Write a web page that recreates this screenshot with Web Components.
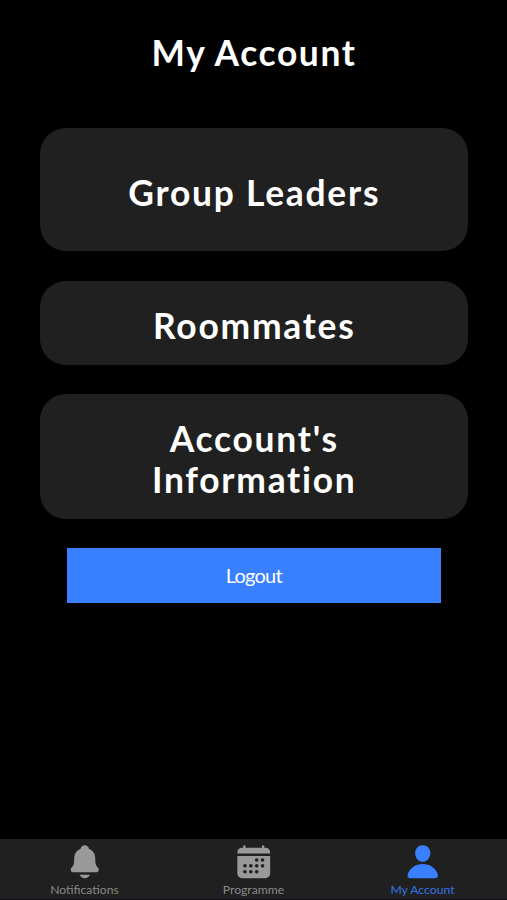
<!DOCTYPE html>
<html lang="en">
<head>
<meta charset="utf-8">
<meta name="viewport" content="width=device-width, initial-scale=1">
<title>My Account</title>
<style>
  html, body { margin: 0; height: 100%; background: #000; }
  body { font-family: Lato, "Liberation Sans", sans-serif; color: #fff; }
</style>
</head>
<body>
<account-page>
  <span slot="title">My Account</span>
  <menu-card tall>Group Leaders</menu-card>
  <menu-card>Roommates</menu-card>
  <menu-card>Account's Information</menu-card>
  <action-button>Logout</action-button>
  <tab-bar slot="footer">
    <tab-item icon="notifications">Notifications</tab-item>
    <tab-item icon="calendar">Programme</tab-item>
    <tab-item icon="person" active>My Account</tab-item>
  </tab-bar>
</account-page>

<script>
const dot = (x, y) => `<circle cx="${x}" cy="${y}" r="25" fill="var(--bar-bg, #202020)"/>`;

const ICONS = {
  notifications: '<path d="M440.08 341.31c-1.66-2-3.29-4-4.89-5.93-22-26.61-35.31-42.67-35.31-118 0-39-9.33-71-27.72-95-13.56-17.73-31.89-31.18-56.05-41.12a3 3 0 01-.82-.67C306.6 51.49 282.82 32 256 32s-50.59 19.49-59.28 48.56a3.13 3.13 0 01-.81.65c-56.38 23.21-83.78 67.74-83.78 136.14 0 75.36-13.29 91.42-35.31 118-1.6 1.93-3.23 3.89-4.89 5.93a35.16 35.16 0 00-4.65 37.62c6.17 13 19.32 21.07 34.33 21.07H410.5c14.94 0 28-8.06 34.19-21a35.17 35.17 0 00-4.61-37.66zM256 480a80.06 80.06 0 0070.44-42.13 4 4 0 00-3.54-5.87H189.12a4 4 0 00-3.55 5.87A80.06 80.06 0 00256 480z"/>',
  calendar: '<path d="M480 128a64 64 0 00-64-64h-16V48a16 16 0 00-32 0v16H144V48a16 16 0 00-32 0v16H96a64 64 0 00-64 64v12a4 4 0 004 4h440a4 4 0 004-4zM32 416a64 64 0 0064 64h320a64 64 0 0064-64V179a3 3 0 00-3-3H35a3 3 0 00-3 3z"/>'
    + [[296, 232], [376, 232], [136, 312], [216, 312], [296, 312], [376, 312], [136, 392], [216, 392], [296, 392]].map(p => dot(...p)).join(''),
  person: '<path d="M332.64 64.58C313.18 43.57 286 32 256 32c-30.16 0-57.43 11.5-76.8 32.38-19.58 21.11-29.12 49.8-26.88 80.78C156.76 206.28 203.27 256 256 256s99.16-49.71 103.67-110.82c2.27-30.7-7.33-59.33-27.03-80.6zM432 480H80a31 31 0 01-24.2-11.13c-6.5-7.77-9.12-18.38-7.18-29.11C57.06 392.94 83.4 353.61 124.8 326c36.78-24.51 83.37-38 131.2-38s94.42 13.5 131.2 38c41.4 27.6 67.74 66.93 76.18 113.75 1.94 10.73-.68 21.34-7.18 29.11A31 31 0 01432 480z"/>'
};

class AccountPage extends HTMLElement {
  constructor() {
    super();
    this.attachShadow({ mode: 'open' }).innerHTML = `
      <style>
        :host { display: flex; flex-direction: column; height: 100vh; --bar-bg: #202020; --primary: #3880ff; }
        h1 { margin: 0; padding: 32px 0 55px; font-size: 35.4px; line-height: 41px; letter-spacing: 1.6px; text-indent: 1px; font-weight: 700; text-align: center; }
        main { flex: 1; min-height: 0; display: flex; flex-direction: column; gap: 29.5px; padding: 0 39.5px 0 40px; }
      </style>
      <h1><slot name="title"></slot></h1>
      <main><slot></slot></main>
      <slot name="footer"></slot>
    `;
  }
}

class MenuCard extends HTMLElement {
  constructor() {
    super();
    this.attachShadow({ mode: 'open' }).innerHTML = `
      <style>
        :host { display: block; padding: 25px 80px 18.5px 81px; border-radius: 26px; background: #202020; }
        :host([tall]) { padding: 45px 60px 37.5px 61px; }
        h2 { margin: 0; font-size: 35.4px; line-height: 40.5px; letter-spacing: 1.75px; font-weight: 700; text-align: center; }
      </style>
      <h2><slot></slot></h2>
    `;
  }
}

class ActionButton extends HTMLElement {
  constructor() {
    super();
    this.attachShadow({ mode: 'open' }).innerHTML = `
      <style>
        :host { display: block; margin: 0 27px; }
        button { display: block; width: 100%; height: 54.5px; border: 0; padding: 0; background: var(--primary); color: #fff; font: 400 20px Lato, "Liberation Sans", sans-serif; letter-spacing: -.75px; }
      </style>
      <button type="button"><slot></slot></button>
    `;
  }
}

class TabBar extends HTMLElement {
  constructor() {
    super();
    this.attachShadow({ mode: 'open' }).innerHTML = `
      <style>
        :host { display: grid; grid-template-columns: repeat(3, 1fr); height: 61.5px; box-sizing: border-box; background: var(--bar-bg); border-bottom: 1px solid #150c14; }
      </style>
      <slot></slot>
    `;
  }
}

class TabItem extends HTMLElement {
  constructor() {
    super();
    this.attachShadow({ mode: 'open' });
  }

  connectedCallback() {
    this.shadowRoot.innerHTML = `
      <style>
        :host { display: flex; flex-direction: column; align-items: center; padding-top: 4px; color: #999; }
        :host([active]) { color: var(--primary); }
        svg { display: block; width: 37.5px; height: 37.5px; fill: currentColor; }
        span { margin-top: 2px; font-size: 12.2px; line-height: 15px; opacity: .88; }
      </style>
      <svg viewBox="0 0 512 512" aria-hidden="true">${ICONS[this.getAttribute('icon')] || ''}</svg>
      <span><slot></slot></span>
    `;
  }
}

customElements.define('account-page', AccountPage);
customElements.define('menu-card', MenuCard);
customElements.define('action-button', ActionButton);
customElements.define('tab-bar', TabBar);
customElements.define('tab-item', TabItem);
</script>
</body>
</html>
